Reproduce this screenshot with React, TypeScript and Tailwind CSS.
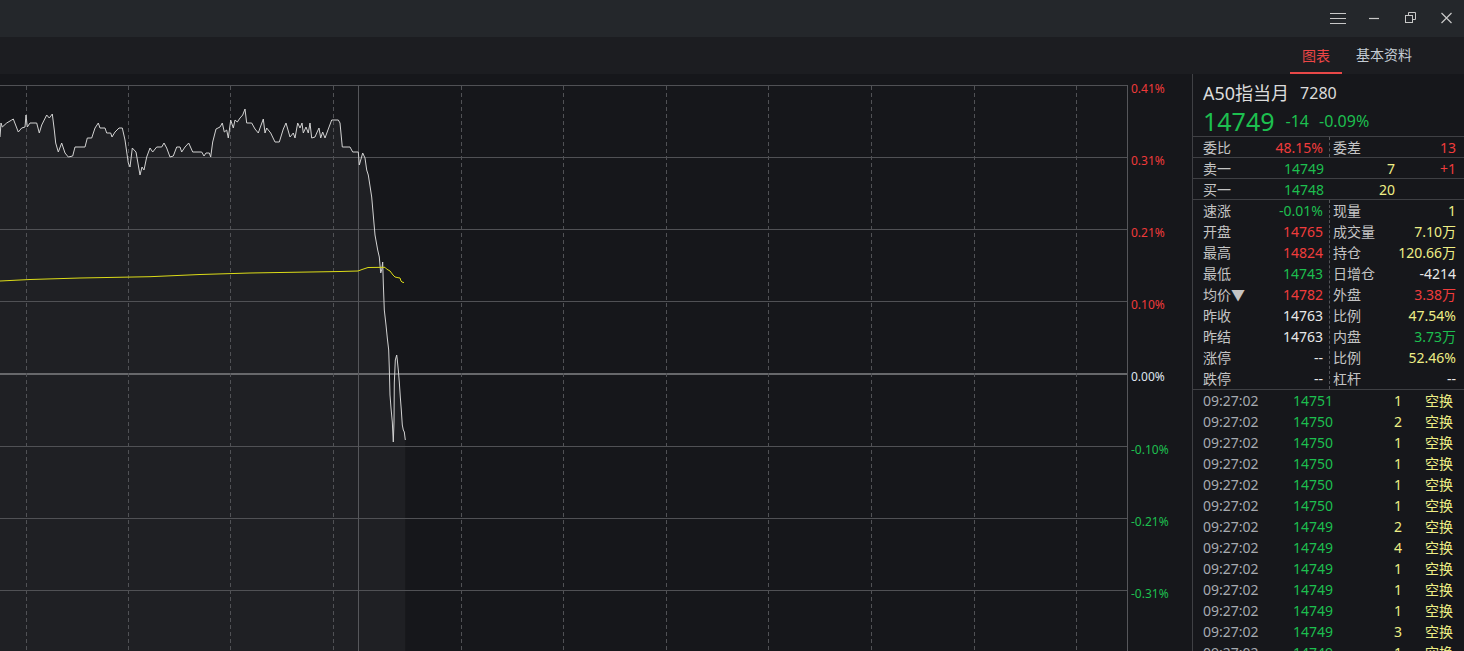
import React from "react";

type Cell = { label: string; value: string; color: string };

const priceLine: [number, number][] = [
    [0, 137], [1, 123], [2.3, 127], [6.7, 123], [11.7, 120], [13.3, 119], [18.3, 132], [21.7, 128], [25, 127], [26, 115],
    [27.3, 127], [30, 123], [36.7, 123], [39.3, 133], [41.7, 125], [46.7, 115], [49.3, 118], [52.3, 114], [54.3, 130],
    [55.7, 143], [58.3, 152], [61.7, 143], [65, 153], [68.3, 157], [72.7, 156], [75, 147], [85, 147], [87.3, 138],
    [91.7, 138], [95, 128], [98.3, 123], [100, 128], [105, 128], [106.7, 133], [110.7, 133], [112, 137], [115, 132],
    [119, 128], [122.3, 128], [125, 140], [128.3, 163], [130, 167], [132.3, 148], [136, 152], [140, 175], [142, 167],
    [144, 170], [146.7, 157], [150, 148], [152.7, 152], [156.7, 147], [161.7, 147], [164, 143], [166.7, 148], [170, 157],
    [173.3, 156], [176.7, 147], [180, 147], [181.7, 152], [185, 147], [188.7, 143], [192.7, 152], [201.7, 152], [204, 156],
    [206, 153], [209.3, 153], [210.7, 157], [212.7, 142], [216, 129], [220, 127], [222.3, 123], [224.3, 132], [226.7, 130],
    [228.3, 138], [230.7, 120], [233.3, 128], [235, 120], [237.3, 122], [240, 118], [242.7, 115], [245, 109], [246.7, 123],
    [251.7, 123], [255, 129], [258.3, 133], [260, 128], [263.3, 119], [265, 133], [266.7, 128], [270.7, 133], [275, 142],
    [279.3, 142], [283.3, 129], [286, 123], [290, 137], [293.3, 133], [295, 138], [297.7, 123], [300, 128], [302, 123],
    [303.3, 133], [306, 127], [308.3, 133], [310, 123], [311.7, 138], [315, 137], [316.7, 133], [319, 128], [320.7, 138],
    [322.7, 132], [325, 138], [328.3, 129], [331.7, 120], [338.3, 120], [340, 123], [342.3, 147], [350, 147], [352.7, 152],
    [358.3, 152], [359.3, 165], [362.7, 153], [365, 158], [366.7, 170], [368.3, 175], [371.7, 197], [375, 235],
    [377.7, 250], [379.3, 257], [380.7, 273], [381.7, 270], [382.7, 262], [383.3, 283], [384.3, 310], [386, 325],
    [387.3, 338], [388.7, 350], [389.3, 368], [390, 395], [391, 408], [392.3, 422], [393.3, 442], [394, 422], [394.3, 383],
    [395.3, 360], [396.7, 355], [397.3, 360], [398.3, 370], [399.3, 382], [400.3, 397], [401.3, 410], [402.3, 425],
    [403.3, 430], [404.3, 432], [405.3, 440],
];

const avgLine: [number, number][] = [
    [0, 281], [30, 279.5], [80, 278], [150, 276.7], [200, 274.5], [250, 273], [340, 271.5], [358, 271], [362, 269.5],
    [368, 267.5], [385, 267.3], [386.5, 269], [390, 271], [393, 275], [395, 277], [398, 277.7], [400, 278], [401, 281],
    [402, 282], [404, 282.6],
];

const hLines = [85, 157, 229, 301, 446, 518, 590];
const dashX = [26, 128, 230, 333, 461, 563, 666, 768, 871, 974, 1076];

const axis = [
    {t: "0.41%", c: "text-[#ee3a3a]"},
    {t: "0.31%", c: "text-[#ee3a3a]"},
    {t: "0.21%", c: "text-[#ee3a3a]"},
    {t: "0.10%", c: "text-[#ee3a3a]"},
    {t: "0.00%", c: "text-[#dfe6ee]"},
    {t: "-0.10%", c: "text-[#1dbf4f]"},
    {t: "-0.21%", c: "text-[#1dbf4f]"},
    {t: "-0.31%", c: "text-[#1dbf4f]"},
];

const R = "text-[#f03c3c]";
const G = "text-[#1dbf4f]";
const Y = "text-[#eeee86]";
const W = "text-[#e8e8e8]";

const info: [Cell, Cell][] = [
    [{label: "速涨", value: "-0.01%", color: G}, {label: "现量", value: "1", color: Y}],
    [{label: "开盘", value: "14765", color: R}, {label: "成交量", value: "7.10万", color: Y}],
    [{label: "最高", value: "14824", color: R}, {label: "持仓", value: "120.66万", color: Y}],
    [{label: "最低", value: "14743", color: G}, {label: "日增仓", value: "-4214", color: W}],
    [{label: "均价▼", value: "14782", color: R}, {label: "外盘", value: "3.38万", color: R}],
    [{label: "昨收", value: "14763", color: W}, {label: "比例", value: "47.54%", color: Y}],
    [{label: "昨结", value: "14763", color: W}, {label: "内盘", value: "3.73万", color: G}],
    [{label: "涨停", value: "--", color: W}, {label: "比例", value: "52.46%", color: Y}],
    [{label: "跌停", value: "--", color: W}, {label: "杠杆", value: "--", color: W}],
];

const ticks: [number, number][] = [
    [14751, 1], [14750, 2], [14750, 1], [14750, 1], [14750, 1], [14750, 1], [14749, 2],
    [14749, 4], [14749, 1], [14749, 1], [14749, 1], [14749, 3], [14749, 1],
];

const pts = (p: [number, number][]) => p.map(([x, y]) => `${x},${y}`).join(" ");

const Chart = () => {
    const area = pts([...priceLine, [405.3, 651], [0, 651]]);
    return (
        <svg width={1128} height={577} viewBox="0 74 1128 577" className="block">
            <polygon points={area} fill="#1f2024"/>
            {hLines.map(y => (
                <line key={y} x1={0} x2={1128} y1={y + 0.5} y2={y + 0.5} stroke="#505155"/>
            ))}
            <line x1={0} x2={1128} y1={374} y2={374} stroke="#67686b" strokeWidth={2}/>
            {dashX.map(x => (
                <line key={x} x1={x + 0.5} x2={x + 0.5} y1={86} y2={651} stroke="#505155" strokeDasharray="4 3"/>
            ))}
            <line x1={358.5} x2={358.5} y1={85} y2={651} stroke="#56575b"/>
            <line x1={1127.5} x2={1127.5} y1={85} y2={651} stroke="#56575b"/>
            <polyline points={pts(priceLine)} fill="none" stroke="#d2d2d2" strokeWidth={1}/>
            <polyline points={pts(avgLine)} fill="none" stroke="#dcdc18" strokeWidth={1}/>
        </svg>
    );
};

const TitleBar = () => (
    <div className="flex h-[37px] shrink-0 items-center justify-end bg-[#24272b] pr-[12px] text-[#c8c8c8]">
        <svg width={16} height={37} viewBox="0 0 16 37">
            <path d="M0 13.5H16M0 18.5H16M0 23.5H16" stroke="#c8c8c8" strokeWidth={1.2}/>
        </svg>
        <svg width={10} height={37} viewBox="0 0 10 37" className="ml-[23px]">
            <path d="M0 18.5H10" stroke="#c8c8c8" strokeWidth={1.2}/>
        </svg>
        <svg width={11} height={37} viewBox="0 0 11 37" className="ml-[26px]">
            <rect x={0.5} y={15.5} width={7} height={7} fill="none" stroke="#c8c8c8"/>
            <path d="M3.5 15.5V12.5H10.5V19.5H7.5" fill="none" stroke="#c8c8c8"/>
        </svg>
        <svg width={11} height={37} viewBox="0 0 11 37" className="ml-[25px]">
            <path d="M0.5 13L10.5 23M10.5 13L0.5 23" stroke="#c8c8c8" strokeWidth={1.2}/>
        </svg>
    </div>
);

const TabBar = () => (
    <div className="flex h-[37px] shrink-0 justify-end bg-[#1c1d21] pr-[38px] text-[14px]">
        <div className="flex w-[52px] items-center justify-center border-b-2 border-[#e84848] pt-[2px] text-[#ec4646]">图表</div>
        <div className="flex w-[84px] items-center justify-center pb-[2px] text-[#c4ccd4]">基本资料</div>
    </div>
);

const Panel = () => (
    <div className="flex flex-1 flex-col overflow-hidden border-l border-[#3f4044] text-[14px]">
        <div className="h-[63px] shrink-0 border-b border-[#3f4044] pl-[10px] pt-[6px]">
            <div className="flex h-[26px] items-center">
                <span className="text-[18px] text-[#dcdcdc]">A50指当月</span>
                <span className="ml-[11px] text-[16px] text-[#dcdcdc]">7280</span>
            </div>
            <div className="flex h-[30px] items-center text-[#1dbf4f]">
                <span className="text-[25px] leading-none">14749</span>
                <span className="ml-[11px] text-[16px]">-14</span>
                <span className="ml-[10px] text-[16px]">-0.09%</span>
            </div>
        </div>
        <div className="flex h-[21px] shrink-0 border-b border-[#3f4044]">
            <div className="flex w-[137px] items-center justify-between border-r border-dashed border-[#55565a] pl-[10px] pr-[6px]">
                <span className="text-[#c4c4c4]">委比</span>
                <span className={R}>48.15%</span>
            </div>
            <div className="flex flex-1 items-center justify-between pl-[3px] pr-[8px]">
                <span className="text-[#c4c4c4]">委差</span>
                <span className={R}>13</span>
            </div>
        </div>
        <div className="flex h-[21px] shrink-0 items-center border-b border-[#3f4044]">
            <div className="flex w-[137px] items-center justify-between pl-[10px] pr-[6px]">
                <span className="text-[#c4c4c4]">卖一</span>
                <span className={G}>14749</span>
            </div>
            <span className={`w-[65px] text-right ${Y}`}>7</span>
            <span className={`flex-1 pr-[8px] text-right ${R}`}>+1</span>
        </div>
        <div className="flex h-[21px] shrink-0 items-center border-b border-[#3f4044]">
            <div className="flex w-[137px] items-center justify-between pl-[10px] pr-[6px]">
                <span className="text-[#c4c4c4]">买一</span>
                <span className={G}>14748</span>
            </div>
            <span className={`w-[65px] text-right ${Y}`}>20</span>
        </div>
        <div className="flex shrink-0 border-b border-[#3f4044]">
            <div className="flex w-[137px] flex-col border-r border-dashed border-[#55565a]">
                {info.map(([l], i) => (
                    <div key={i} className="flex h-[21px] items-center justify-between pl-[10px] pr-[6px]">
                        <span className="text-[#c4c4c4]">{l.label}</span>
                        <span className={l.color}>{l.value}</span>
                    </div>
                ))}
            </div>
            <div className="flex flex-1 flex-col">
                {info.map(([, r], i) => (
                    <div key={i} className="flex h-[21px] items-center justify-between pl-[3px] pr-[8px]">
                        <span className="text-[#c4c4c4]">{r.label}</span>
                        <span className={r.color}>{r.value}</span>
                    </div>
                ))}
            </div>
        </div>
        <div className="flex flex-col">
            {ticks.map(([p, v], i) => (
                <div key={i} className="flex h-[21px] shrink-0 items-center">
                    <div className="flex w-[140px] justify-between pl-[10px]">
                        <span className="text-[#a6aab0]">09:27:02</span>
                        <span className={G}>{p}</span>
                    </div>
                    <span className={`w-[69px] text-right ${Y}`}>{v}</span>
                    <span className={`ml-[23px] ${Y}`}>空换</span>
                </div>
            ))}
        </div>
    </div>
);

export default function App() {
    return (
        <div
            className="flex h-screen w-full flex-col overflow-hidden bg-[#16171b]"
            style={{fontFamily: "'Noto Sans', 'Noto Sans CJK SC', sans-serif"}}
        >
            <TitleBar/>
            <TabBar/>
            <div className="flex flex-1 overflow-hidden">
                <div className="w-[1128px] shrink-0">
                    <Chart/>
                </div>
                <div className="flex w-[64px] shrink-0 flex-col pl-[3px] pt-[7px] text-[12px] leading-[16px]">
                    {axis.map((a, i) => (
                        <div key={a.t} className={i === 4 ? "h-[73px] shrink-0" : "h-[72px] shrink-0"}>
                            <span className={a.c}>{a.t}</span>
                        </div>
                    ))}
                </div>
                <Panel/>
            </div>
        </div>
    );
}
